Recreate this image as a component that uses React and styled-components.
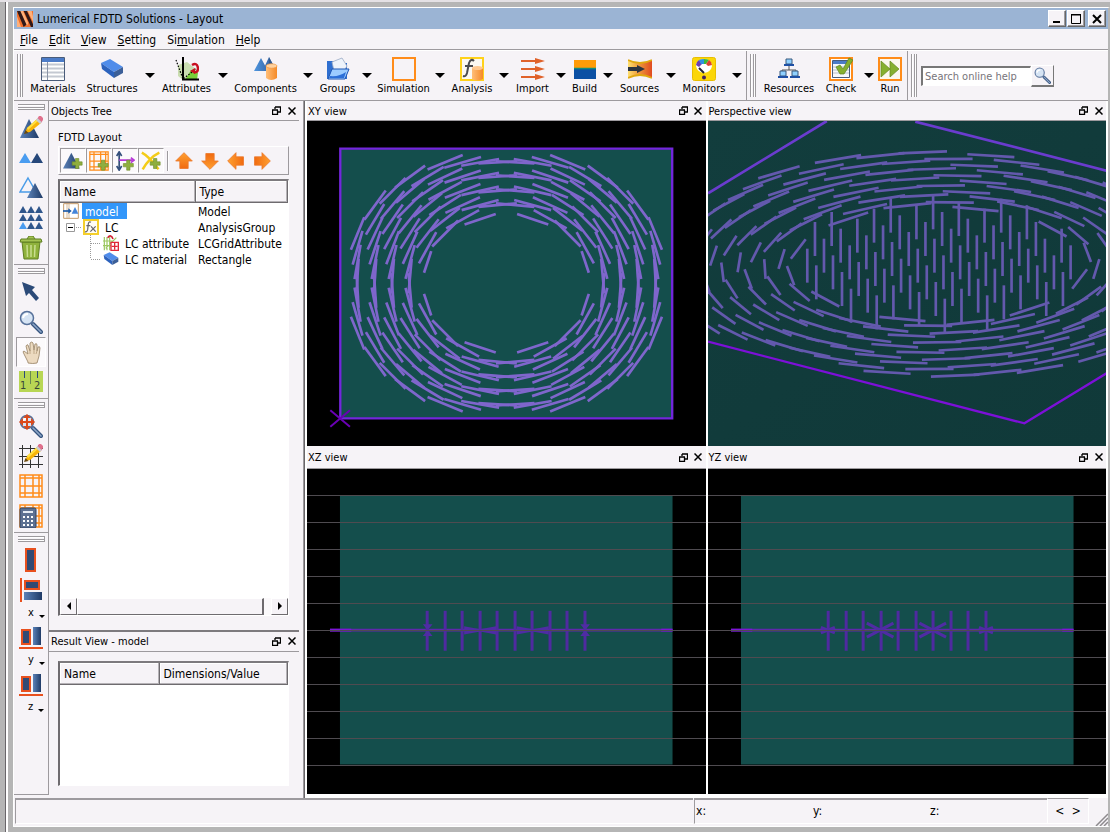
import React from "react";
import styled, { createGlobalStyle, css } from "styled-components";

const face = "#f6f3f7";
const shade = "#9d9a9e";

const GlobalStyle = createGlobalStyle`
  * { box-sizing: border-box; }
  body {
    margin: 0;
    background: #b5b5b5;
    color: #000;
    font: 11px/14px "DejaVu Sans Condensed", "DejaVu Sans", sans-serif;
  }
  button, input {
    font: inherit;
    color: inherit;
  }
  button {
    padding: 0;
    border: 0;
    background: none;
  }
  svg { display: block; flex: none; }
`;

const Desktop = styled.div`
  display: flex;
  min-height: 100vh;
  background: #b5b5b5;
  border-top: 2px solid #e4e1e5;
  border-bottom: 2px solid #69666a;
`;

const Backdrop = styled.div`
  width: 8px;
  border-left: 5px solid #b5b5b5;
  background: linear-gradient(90deg, #69666a 1px, #fff 1px);
`;

const Frame = styled.div`
  flex: 1;
  min-width: 0;
  padding: 5px 0 5px 5px;
  display: flex;
`;

const Window = styled.div`
  flex: 1;
  min-width: 0;
  display: flex;
  flex-direction: column;
  background: ${face};
  border: 1px solid #fff;
  border-right: 2px solid #b5b5b5;
`;

const TitleBar = styled.header`
  height: 21px;
  flex: none;
  display: flex;
  align-items: center;
  padding: 0 2px 0 3px;
  background: #9bb4d4;
  font-size: 12px;
`;

const Title = styled.h1`
  flex: 1;
  margin: 0 0 0 4px;
  padding-top: 1px;
  font-size: 12px;
  font-weight: normal;
`;

const CaptionButton = styled.button`
  width: 18px;
  height: 17px;
  margin-left: ${(p) => (p.$apart ? 3 : 1)}px;
  display: grid;
  place-items: center;
  background: ${face};
  border: 1px solid #fff;
  border-right-color: #666;
  border-bottom-color: #666;
  box-shadow: inset -1px -1px ${shade};
`;

const MenuBar = styled.nav`
  height: 21px;
  flex: none;
  display: flex;
  align-items: center;
  gap: 11px;
  padding: 2px 0 0 6px;
  border-bottom: 1px solid ${shade};
`;

const MenuItem = styled.button`
  font-size: 12px;
  line-height: 16px;
`;

const ToolBars = styled.div`
  height: 51px;
  flex: none;
  display: flex;
  border-top: 1px solid #fff;
  border-bottom: 1px solid ${shade};
`;

const ToolBar = styled.div`
  display: flex;
  padding: 0 ${(p) => p.$end || 0}px 0 3px;
  border-right: ${(p) => (p.$last ? 0 : 1)}px solid ${shade};
`;

const Grip = styled.div`
  width: 6px;
  margin: 3px 0;
  border: 1px solid ${shade};
  border-width: 0 1px;
  background: linear-gradient(90deg, #fff 1px, transparent 1px 2px, ${shade} 2px 3px, #fff 3px);
`;

const ToolButton = styled.button`
  width: ${(p) => p.$w}px;
  padding-top: 6px;
  display: flex;
  flex-direction: column;
  align-items: center;
  gap: 1px;
  white-space: nowrap;
`;

const DropButton = styled.button`
  width: 18px;
  display: grid;
  place-items: center;
  &::after {
    content: "";
    border: 5px solid transparent;
    border-top-color: #000;
    border-bottom: 0;
  }
`;

const Search = styled.form`
  display: flex;
  align-items: center;
  margin-left: 4px;
`;

const SearchInput = styled.input`
  width: 110px;
  height: 20px;
  padding: 0 2px;
  border: 2px solid #777;
  border-right: 1px solid #fff;
  border-bottom: 1px solid #fff;
  background: #fff;
  &::placeholder { color: #77747a; opacity: 1; }
`;

const SearchButton = styled.button`
  width: 23px;
  height: 22px;
  display: grid;
  place-items: center;
  border: 1px solid #fff;
  border-right-color: #777;
  border-bottom: 2px solid #777;
`;

const Body = styled.div`
  flex: 1;
  min-height: 0;
  display: flex;
`;

const SideBar = styled.aside`
  width: 35px;
  flex: none;
  display: flex;
  flex-direction: column;
  border-right: 1px solid ${shade};
  border-bottom: 1px solid ${shade};
  margin-bottom: 3px;
`;

const SideGroup = styled.div`
  height: ${(p) => p.$h}px;
  padding-top: 3px;
  display: flex;
  flex-direction: column;
  align-items: center;
  border-bottom: 1px solid ${shade};
  &:last-child { border: 0; height: auto; }
`;

const SideGrip = styled.div`
  width: 27px;
  height: 6px;
  margin-bottom: 3px;
  border: 1px solid ${shade};
  border-left: 0;
  background: linear-gradient(#fff 1px, transparent 1px 2px, ${shade} 2px 3px, #fff 3px);
`;

const SideButton = styled.button`
  width: 30px;
  height: 30px;
  flex: none;
  display: grid;
  place-items: center;
  ${(p) =>
    p.$on &&
    css`
      background: #fcfafc;
      border: 1px solid ${shade};
      border-right-color: #fff;
      border-bottom-color: #fff;
    `}
`;

const AxisButton = styled.button`
  width: 30px;
  height: 17px;
  padding: 2px 0 0 12px;
  display: flex;
  align-items: flex-start;
  gap: 5px;
  line-height: 12px;
  &::after {
    content: "";
    margin-top: 8px;
    border: 3px solid transparent;
    border-top-color: #000;
    border-bottom: 0;
  }
`;

const LeftDocks = styled.div`
  width: 250px;
  flex: none;
  display: flex;
  flex-direction: column;
`;

const Dock = styled.section`
  display: flex;
  flex-direction: column;
  flex: ${(p) => (p.$h ? `0 0 ${p.$h}px` : "1 1 0")};
  min-height: 0;
  min-width: 0;
  border-top: ${(p) => (p.$h ? "2px solid #7d7a7e" : 0)};
  margin-top: ${(p) => (p.$h ? 4 : 0)}px;
`;

const DockTitle = styled.div`
  height: ${(p) => (p.$tall ? 23 : 20)}px;
  flex: none;
  display: flex;
  align-items: center;
  padding: 0 0 0 ${(p) => (p.$view ? 1 : 2)}px;
  border-bottom: 1px solid ${shade};
  background: ${face};
`;

const DockName = styled.h2`
  flex: 1;
  margin: 0;
  padding-top: 2px;
  font-size: 11px;
  font-weight: normal;
`;

const DockButton = styled.button`
  width: 15px;
  height: 14px;
  display: grid;
  place-items: center;
`;

const Splitter = styled.div`
  width: 8px;
  flex: none;
  border-right: 2px solid #fff;
  background: linear-gradient(90deg, transparent 4px, ${shade} 4px 5px, #696669 5px);
`;

const TreeBody = styled.div`
  flex: 1;
  min-height: 0;
  padding: 10px 10px 10px 9px;
  display: flex;
  flex-direction: column;
`;

const ObjectTools = styled.div`
  height: 29px;
  flex: none;
  margin: 1px 0 4px;
  padding-left: 1px;
  display: flex;
  align-items: center;
  border: 1px solid #fff;
  border-right-color: ${shade};
  border-bottom-color: ${shade};
`;

const AddButton = styled.button`
  width: 26px;
  height: 25px;
  display: grid;
  place-items: center;
  background: #fbf9fb;
  border: 1px solid ${shade};
  border-right-color: #fff;
  border-bottom-color: #fff;
`;

const MoveButton = styled.button`
  width: 26px;
  height: 25px;
  display: grid;
  place-items: center;
`;

const Divider = styled.div`
  width: 2px;
  height: 20px;
  margin: 0 2px 0 3px;
  background: ${shade};
  border-right: 1px solid #fff;
`;

const Sunken = styled.div`
  flex: 1;
  min-height: 0;
  display: flex;
  flex-direction: column;
  justify-content: space-between;
  background: #fff;
  border: 2px solid #6e6b6f;
  border-top-color: #7d7a7e;
  border-right: 1px solid #fff;
  border-bottom: 1px solid #fff;
`;

const Table = styled.table`
  width: 100%;
  table-layout: fixed;
  border-collapse: collapse;
  font-size: 12px;
`;

const Th = styled.th`
  width: ${(p) => (p.$w ? `${p.$w}px` : "auto")};
  height: ${(p) => p.$h}px;
  padding: 2px 4px 0;
  text-align: left;
  font-weight: normal;
  background: ${face};
  border-bottom: 1px solid #6e6b6f;
  border-right: 1px solid #6e6b6f;
  box-shadow: inset -1px -1px #b5b2b6, inset 1px 1px #fff;
`;

const Td = styled.td`
  height: 16px;
  padding: ${(p) => (p.$tree ? "0 0 0 3px" : "2px 3px 0")};
  line-height: 14px;
  white-space: nowrap;
`;

const Node = styled.span`
  height: 16px;
  display: flex;
  align-items: center;
`;

const NodeText = styled.span`
  margin-left: 3px;
  padding: 2px 8px 0 3px;
  ${(p) =>
    p.$selected &&
    css`
      background: #3296fa;
      color: #fff;
    `}
`;

const ScrollBar = styled.div`
  height: 17px;
  display: flex;
  background: #fbf9fb;
`;

const ScrollButton = styled.button`
  width: 17px;
  display: grid;
  place-items: center;
  background: ${face};
  border: 1px solid #fff;
  border-right-color: #6e6b6f;
  border-bottom-color: #6e6b6f;
`;

const Thumb = styled.div`
  flex: 1;
  margin-right: 7px;
  background: ${face};
  border: 1px solid #fff;
  border-right: 2px solid #6e6b6f;
  border-bottom: 1px solid #6e6b6f;
`;

const ResultBody = styled.div`
  flex: 1;
  min-height: 0;
  padding: 9px 10px 12px 9px;
  display: flex;
`;

const Views = styled.div`
  flex: 1;
  min-width: 0;
  display: grid;
  grid-template-columns: 1fr 1fr;
  grid-template-rows: 345px 1fr;
  gap: 0 2px;
  padding: 0 2px 4px 0;
  background: #fff;
`;

const Viewport = styled.svg`
  flex: 1;
  width: 100%;
  min-height: 0;
  background: ${(p) => p.$bg || "#000"};
`;

const StatusBar = styled.footer`
  height: 28px;
  flex: none;
  display: flex;
  font-size: 12px;
`;

const Field = styled.div`
  flex: ${(p) => (p.$w ? `0 0 ${p.$w}px` : "1 1 0")};
  display: flex;
  align-items: center;
  padding-left: 1px;
  margin: 0 0 2px 1px;
  border-top: 2px solid ${shade};
  border-left: 1px solid ${shade};
  border-bottom: 1px solid #fff;
`;

const Coord = styled.span`
  width: 117px;
`;

const Pager = styled.div`
  width: 42px;
  margin-bottom: 2px;
  display: flex;
  justify-content: space-evenly;
  border: 1px solid #fff;
  border-top-color: ${shade};
`;

const SizeGrip = styled.div`
  width: 19px;
  display: flex;
  align-items: flex-end;
  justify-content: flex-end;
`;

/* ---------- icons ---------- */

const Svg = ({ s = 24, children, ...rest }) => (
  <svg width={s} height={s} viewBox="0 0 24 24" aria-hidden="true" {...rest}>
    {children}
  </svg>
);

const GradientDefs = styled.svg`
  position: absolute;
`;

const Defs = () => (
  <GradientDefs width="0" height="0" aria-hidden="true">
    <defs>
      <linearGradient id="navy">
        <stop offset="0" stopColor="#5b82b8" />
        <stop offset="1" stopColor="#1f3a66" />
      </linearGradient>
      <linearGradient id="orange">
        <stop offset="0" stopColor="#ffbe78" />
        <stop offset="1" stopColor="#f58a28" />
      </linearGradient>
      <linearGradient id="fire" x2="0" y2="1">
        <stop offset="0" stopColor="#ffa030" />
        <stop offset="1" stopColor="#f06a10" />
      </linearGradient>
      <linearGradient id="sky">
        <stop offset="0" stopColor="#4f96e0" />
        <stop offset="1" stopColor="#2c5490" />
      </linearGradient>
      <linearGradient id="beam">
        <stop offset="0" stopColor="#ffe070" />
        <stop offset=".4" stopColor="#f0a040" />
        <stop offset="1" stopColor="#e04a20" />
      </linearGradient>
      <linearGradient id="persp" x1="0" y1="0" x2="1" y2="1">
        <stop offset="0" stopColor="#123d3d" />
        <stop offset="1" stopColor="#103939" />
      </linearGradient>
    </defs>
  </GradientDefs>
);

const Pencil = () => (
  <g>
    <path d="M6 17l2-5L18 3l4 4-11 9z" fill="#f8b408" />
    <path d="M8 12L18 3l1.500 1.500L9 14z" fill="#ffe040" />
    <path d="M18 3l2-3h2l2 2v2l-2 3z" fill="#e0708c" />
    <path d="M17 4l1.500-2 4 4L21 8z" fill="#c9cdd4" />
    <path d="M5 18l1.500-4 3 3z" fill="#6b4a10" />
  </g>
);

const Lens = () => (
  <g>
    <path d="M14 14l8 8" stroke="#35537e" strokeWidth="4" strokeLinecap="round" />
    <path d="M14 14l8 8" stroke="#8ea7c8" strokeWidth="1.6" strokeLinecap="round" />
    <circle cx="8" cy="8" r="6.5" fill="#d6e4f4" stroke="#57719a" strokeWidth="1.5" />
    <path d="M4 8q1-4 5-4" stroke="#fff" strokeWidth="2" fill="none" />
  </g>
);

const Brick = () => (
  <g>
    <path d="M1 6l9-4 13 8-9 5z" fill="#4f8cea" />
    <path d="M1 6l13 9v6L2 12z" fill="#2c62bd" />
    <path d="M14 15l9-5v6l-9 5z" fill="#3c5f98" />
  </g>
);

const Plus = ({ x = 11, y = 10 }) => (
  <path d={`M${x + 4} ${y}h4v4h4v4h-4v4h-4v-4h-4v-4h4z`} fill="#8fae3f" stroke="#6c8c28" strokeWidth=".7" />
);

const Mesh = () => (
  <path d="M1 1h22v22H1zM6 1v22M14 1v22M20 1v22M1 4h22M1 12h22M1 19h22" fill="none" stroke="#ff8c1a" strokeWidth="1.5" />
);

const Logo = () => (
  <Svg s={16}>
    <path d="M0 0h24v24H0z" fill="#f0702c" />
    <path d="M0 0h6l9 20-5 4zM10 0h5l9 20v4h-3z" fill="#301818" />
    <path d="M5 0h4l8 18-2 4zM16 0h6l2 8v8zM0 8l6 16H0z" fill="#ffb07a" />
  </Svg>
);

const MaterialsIcon = () => (
  <Svg>
    <path d="M.5.5h23v23H.5z" fill="#fff" stroke="#4a5c7a" />
    <path d="M1 1h22v4H1z" fill="#4c7cc8" />
    <path d="M1 7.500h22M1 11.500h22M1 15.500h22M1 19.500h22" stroke="#c4c9d2" strokeWidth="2" />
    <path d="M6.500 5v18" stroke="#8a94a6" />
  </Svg>
);

const AttributesIcon = () => (
  <Svg>
    <path d="M3 8l9-3 9 7-1 8-5 3H8l-5-4z" fill="#c9dcb0" />
    <path d="M16 13l7 3-1 7H10z" fill="#79cf3a" />
    <path d="M8 0v22.500h16" stroke="#000" strokeWidth="2" fill="none" />
    <path d="M1 3l7 19 13-10" stroke="#000" strokeWidth="1.200" strokeDasharray="1.500 1.500" fill="none" />
    <path d="M17 8q5-3 6 3 0 5-4 4" stroke="#c81020" strokeWidth="2.500" fill="none" />
    <path d="M15 14l5-3v6z" fill="#c81020" />
  </Svg>
);

const ComponentsIcon = () => (
  <Svg>
    <path d="M7 1l7 13H0zM15 0l7 13H9z" fill="url(#sky)" />
    <path d="M15 0l7 13h-7z" fill="#31517f" opacity=".6" />
    <path d="M12 9v12q5 4 11 0V9z" fill="url(#orange)" />
    <ellipse cx="17.500" cy="9" rx="5.500" ry="2.200" fill="#ffd2a0" stroke="#f2983f" strokeWidth=".7" />
  </Svg>
);

const GroupsIcon = () => (
  <Svg>
    <path d="M1 4h6l2 2h12v16H1z" fill="#2f6fd0" />
    <path d="M6 5l10-4 5 8-3 5H8z" fill="#eef3fb" stroke="#9aaac4" strokeWidth=".8" />
    <path d="M6 12h17l-4 10H2z" fill="#9cccff" stroke="#1f56b4" />
    <path d="M4 19q9 1 16-4l-2 6H3z" fill="#2c6fd8" />
  </Svg>
);

const SimulationIcon = () => (
  <Svg>
    <path d="M1 1h22v22H1z" fill="none" stroke="#ff8c1a" strokeWidth="2" />
  </Svg>
);

const AnalysisIcon = () => (
  <Svg>
    <path d="M1 1h22v22H1z" fill="#fbf8f2" stroke="#ffd21a" strokeWidth="2" />
    <path d="M14 4q-3-3-5 2L7 16q-1 4-4 3M5 9h8" fill="none" stroke="#4a4a4e" strokeWidth="2" />
    <path d="M12 11v11q5 3 11 0V11z" fill="url(#orange)" />
    <ellipse cx="17.500" cy="11" rx="5.500" ry="2" fill="#ffc890" />
  </Svg>
);

const ImportIcon = () => (
  <Svg>
    <path d="M0 4h16M0 12h16M0 20h16" stroke="#e0622a" strokeWidth="2" />
    <path d="M14 1l10 3-10 3zM14 9l10 3-10 3zM14 17l10 3-10 3z" fill="#e0622a" />
  </Svg>
);

const BuildIcon = () => (
  <Svg>
    <path d="M1 3h22v9H1z" fill="#ff9c08" />
    <path d="M1 12h22v10H1z" fill="#0b50a4" />
    <path d="M1 11.500h22" stroke="#138c7c" strokeWidth="1.500" />
  </Svg>
);

const SourcesIcon = () => (
  <Svg>
    <path d="M0 3q12 6 24 0v18q-12-6-24 0z" fill="url(#beam)" />
    <path d="M0 3q12 6 24 0M0 21q12-6 24 0" stroke="#e0a810" strokeWidth="1.800" fill="none" />
    <path d="M0 10h9V8l8 4-8 4v-2H0z" fill="#2c3440" />
  </Svg>
);

const MonitorsIcon = () => (
  <Svg>
    <rect x=".5" y=".5" width="23" height="23" rx="2" fill="#fbd608" stroke="#e8be00" />
    <path d="M4 9a8 7 0 0 1 16 0q-1 6-8 7-7-1-8-7z" fill="#fff" />
    <path d="M4 8q0-3 3-5l3 4-3 3z" fill="#6b3fb8" />
    <path d="M7 3q2-1 5-1v5H9z" fill="#2f90e0" />
    <path d="M12 2q3 0 5 1l-3 4h-2z" fill="#3cb83c" />
    <path d="M17 3q3 2 3 5l-4 1-2-2z" fill="#e04030" />
    <path d="M7 11l5 5" stroke="#223" strokeWidth="2" />
    <circle cx="12" cy="20.500" r="2" fill="#402060" />
  </Svg>
);

const ResourcesIcon = () => (
  <Svg>
    <path d="M12 8v5M5 16v-3h14v3" fill="none" stroke="#555" />
    <path d="M9 2h6v5H9zM3 14h6v5H3zM15 14h6v5h-6z" fill="#8fd0ff" stroke="#38587c" />
    <path d="M7 7h10v2H7zM1 19h10v2H1zM13 19h10v2H13z" fill="#1e4fa4" />
  </Svg>
);

const CheckIcon = () => (
  <Svg>
    <path d="M1 1h22v22H1z" fill="#fff" stroke="#ff8c1a" strokeWidth="2" />
    <path d="M3.500 3.500h17v17h-17z" fill="#f6f8fc" stroke="#4a5c7a" />
    <path d="M4 4h16v3H4z" fill="#4c7cc8" />
    <path d="M4 10h16M4 13h16M4 16h16" stroke="#b8bfca" />
    <path d="M7 10l4-2 3 4 6-11 4 2-9 14h-4z" fill="#86b030" stroke="#5f8420" strokeWidth=".7" />
  </Svg>
);

const RunIcon = () => (
  <Svg>
    <path d="M1 1h22v22H1z" fill="#fbf8ee" stroke="#ff8c1a" strokeWidth="2" />
    <path d="M3 4l9 8-9 8zM12 4l9 8-9 8z" fill="#86b030" stroke="#64881f" strokeWidth=".7" />
  </Svg>
);

const Hand = () => (
  <Svg>
    <path
      d="M9 22l-4-8q-2-3 0-3l4 3-2-8q1-2 2-1l2 6V3q2-2 3 0l1 7 1-6q2-1 2 1v6l1-4q2-1 2 1l-1 8-2 7q-4 1-9 0z"
      fill="#ecdac0"
      stroke="#a08c70"
      strokeWidth=".9"
    />
    <path d="M11 10v4M15 10v4M18 11l-1 3" stroke="#bfa888" />
  </Svg>
);

const Triangles = ({ list }) => (
  <Svg>
    {list.map(([x, y, w, h, fill]) => (
      <path key={`${x}-${y}`} d={`M${x} ${y}l${w / 2} ${h}h${-w}z`} fill={fill || "#26477a"} />
    ))}
  </Svg>
);

const small = [];
[0, 8, 16].forEach((y) => [4, 12, 20].forEach((x) => small.push([x, y, 8, 7, y === 16 && x === 4 ? "#4a9cf0" : "#2f568c"])));

const Ruler = () => (
  <Svg>
    <path d="M0 1h24v21H0z" fill="#b8d654" />
    <path d="M5.500 1v7M18.500 1v7" stroke="#2c4a7c" />
    <path d="M11.500 1v13" stroke="#6a8a50" />
    <text x="1" y="19" fontSize="11" fill="#37463a">1</text>
    <text x="15" y="19" fontSize="11" fill="#37463a">2</text>
  </Svg>
);

const Trash = () => (
  <Svg>
    <path d="M3 6h18l-2 17H5z" fill="#8fb23c" stroke="#5f7f22" />
    <path d="M2 3h20l1 3H1zM8 3l2-3h4l2 3" fill="#a4c452" stroke="#5f7f22" />
    <path d="M8 9l.5 12M12 9v12M16 9l-.5 12" stroke="#c9de90" strokeWidth="1.500" />
  </Svg>
);

const Align = ({ axis }) => (
  <Svg>
    {axis === "x" ? (
      <g>
        <path d="M2 0v24" stroke="#e8501e" strokeWidth="2" />
        <path d="M6 3h14v8H6z" fill="#314a74" stroke="#e8501e" strokeWidth="2" />
        <path d="M5 14h18v8H5z" fill="url(#navy)" />
      </g>
    ) : (
      <g>
        <path d="M0 23h24" stroke="#e8501e" strokeWidth="2" />
        <path d="M3 5h8v14H3z" fill="#314a74" stroke="#e8501e" strokeWidth="2" />
        <path d="M14 2h8v18h-8z" fill="url(#navy)" />
      </g>
    )}
  </Svg>
);

const Arrow = ({ turn }) => (
  <Svg s={20}>
    <path transform={`rotate(${turn} 12 12)`} d="M12 2l10 10h-5v9H7v-9H2z" fill="url(#fire)" stroke="#ec7a2c" />
  </Svg>
);

const FloatIcon = () => (
  <svg width="9" height="9" viewBox="0 0 9 9" aria-hidden="true">
    <path d="M3 1h6M3 1v2M8.500 1v5H6M.5 4v4.500h5V4M0 4h6" stroke="#000" fill="none" strokeWidth="1.300" />
  </svg>
);

const CloseIcon = () => (
  <svg width="8" height="8" viewBox="0 0 8 8" aria-hidden="true">
    <path d="M.5.5l7 7M7.500.5l-7 7" stroke="#000" strokeWidth="1.500" />
  </svg>
);

const FxIcon = () => (
  <Svg s={16}>
    <path d="M1.500 1.500h21v21h-21z" fill="#fffdf4" stroke="#f4cf2c" strokeWidth="3" />
    <path d="M12 5q-3-2-4 2L7 16q-1 4-4 3M5 10h6M12 11l7 8M19 11l-8 8" fill="none" stroke="#66646a" strokeWidth="1.800" />
  </Svg>
);

const ModelIcon = () => (
  <Svg s={16}>
    <path d="M1 1h22v22H1z" fill="#fff" stroke="#c49a6a" strokeWidth="1.500" />
    <path d="M6 1v22M9 1v22" stroke="#c49a6a" />
    <path d="M0 12h10" stroke="#1c5aa8" strokeWidth="2.500" />
    <path d="M8 8l5 4-5 4z" fill="#1c5aa8" />
    <path d="M18 6l5 10H13z" fill="#4484d8" />
  </Svg>
);

const GridAttrIcon = () => (
  <Svg s={16}>
    <path d="M2 3v20M6 3v20M10 3v20M0 9h16M0 16h12M4 20L20 4" stroke="#9cc860" strokeWidth="1.800" />
    <path d="M7 4q5-6 8 2" stroke="#d02030" strokeWidth="2.500" fill="none" />
    <path d="M12 11h11v12H12z" fill="#fff" stroke="#e02838" strokeWidth="2" />
    <path d="M17.500 12v10M13 17h9" stroke="#e02838" strokeWidth="2" />
  </Svg>
);

const tools = [
  ["Materials", 60, MaterialsIcon, false],
  ["Structures", 58, () => <Svg><Brick /></Svg>, true],
  ["Attributes", 55, AttributesIcon, true],
  ["Components", 67, ComponentsIcon, true],
  ["Groups", 41, GroupsIcon, true],
  ["Simulation", 55, SimulationIcon, true],
  ["Analysis", 46, AnalysisIcon, true],
  ["Import", 39, ImportIcon, true],
  ["Build", 29, BuildIcon, true],
  ["Sources", 45, SourcesIcon, true],
  ["Monitors", 48, MonitorsIcon, true],
];

const runTools = [
  ["Resources", 66, ResourcesIcon, false],
  ["Check", 38, CheckIcon, true],
  ["Run", 24, RunIcon, false],
];

const menus = ["File", "Edit", "View", "Setting", "Simulation", "Help"];

const ToolItems = ({ items }) =>
  items.map(([label, width, Icon, drop]) => (
    <React.Fragment key={label}>
      <ToolButton $w={width}>
        <Icon />
        {label}
      </ToolButton>
      {drop && <DropButton aria-label={`${label} menu`} />}
    </React.Fragment>
  ));

const DockHeader = ({ title, view, tall }) => (
  <DockTitle $view={view} $tall={tall}>
    <DockName>{title}</DockName>
    <DockButton aria-label="Float"><FloatIcon /></DockButton>
    <DockButton aria-label="Close"><CloseIcon /></DockButton>
  </DockTitle>
);

/* ---------- viewports ---------- */

// director grid, half-integer positions around the centre
const directors = [];
for (let i = -8.5; i <= 8.5; i++) {
  for (let j = -8.5; j <= 8.5; j++) {
    const r = Math.hypot(i, j);
    if (r < 9.4) directors.push({ i, j, r });
  }
}

const XYView = () => (
  <Viewport viewBox="6 3 1197 975" preserveAspectRatio="none">
    <path d="M106 86h997v809H106z" fill="#144e4c" stroke="#7326dc" strokeWidth="7" />
    <g stroke="#7f66cc" strokeWidth="8">
      {directors
        .filter(({ r }) => r > 4.7)
        .map(({ i, j, r }) => {
          const steep = Math.abs(i) > Math.abs(j);
          const len = (58 - 6 * (i / r) ** 2) * (r < 4.8 ? (steep ? 0.65 : 0.86) : 1);
          const x = 605 + i * 52.6;
          const y = 490 + j * 42.7;
          const dx = (-j / r) * len;
          const dy = (i / r) * len;
          return <line key={`${i},${j}`} x1={x - dx} y1={y - dy} x2={x + dx} y2={y + dy} />;
        })}
    </g>
    <path d="M76 871l59 49M135 871l-59 49" stroke="#6a00b4" strokeWidth="6" />
  </Viewport>
);

const PerspectiveView = () => (
  <Viewport $bg="#113c3c" viewBox="9 63 1194 975" preserveAspectRatio="none">
    <path d="M9 63h1194v975H9z" fill="url(#persp)" />
    <g stroke="#6359ad" strokeWidth="8">
      {directors.map(({ i, j, r }) => {
        const x = 701 + i * 77 - j * 50;
        const y = 492 + i * 20 + j * 30;
        if (r < 4.6) return <line key={`${i},${j}`} x1={x} y1={y - 51} x2={x} y2={y + 51} />;
        const a = (-j / r) * 0.76;
        const b = (i / r) * 0.86;
        const dx = a * 77 - b * 50;
        const dy = a * 20 + b * 30;
        return <line key={`${i},${j}`} x1={x - dx} y1={y - dy} x2={x + dx} y2={y + dy} />;
      })}
    </g>
    <path d="M9 280L365 63M630 65l573 147" stroke="#6a3cce" strokeWidth="8" />
    <path d="M9 725l948 245 246-150" stroke="#7c10d8" strokeWidth="7" fill="none" />
  </Viewport>
);

const sideBars = [367, 421, 472, 526, 577, 631, 682, 736, 787, 841];

const SideView = ({ yz }) => (
  <Viewport viewBox="6 72 1197 975" preserveAspectRatio="none">
    <path d="M105 153h999v807H105z" fill="#144e4c" />
    <path d="M75 556h1029" stroke="#5e28ac" strokeWidth="9" />
    <path d="M75 556h64M1070 556h34" stroke="#7d14d8" strokeWidth="9" />
    {sideBars.map((x) => (
      <path key={x} d={`M${x} 498v120`} stroke="#4f2aa0" strokeWidth="9" />
    ))}
    {yz ? (
      <path
        d="M483 535l80 42M483 577l80-42M641 535l80 42M641 577l80-42M345 548l42 16M345 564l42-16M820 548l42 16M820 564l42-16"
        stroke="#4f2ca4"
        strokeWidth="9"
      />
    ) : (
      <path
        d="M354 538h29l-14 18 14 18h-29l14-18zM827 538h29l-14 18 14 18h-29l14-18zM478 544l48 9 48-9v25l-48-9-48 9zM636 544l48 9 48-9v25l-48-9-48 9z"
        fill="#4f2ca4"
      />
    )}
    <g stroke="#4f4b50" strokeWidth="3" shapeRendering="crispEdges">
      {Array.from({ length: 11 }, (_, n) => (
        <path key={n} d={`M6 ${151.5 + n * 81}h1197`} />
      ))}
    </g>
  </Viewport>
);

const rows = [
  { name: "model", type: "Model", icon: <ModelIcon />, selected: true },
  { name: "LC", type: "AnalysisGroup", icon: <FxIcon />, level: 1 },
  { name: "LC attribute", type: "LCGridAttribute", icon: <GridAttrIcon />, level: 2 },
  { name: "LC material", type: "Rectangle", icon: <Svg s={16}><Brick /></Svg>, level: 2, last: true },
];

const Branch = ({ level, last }) => {
  if (level === 1) {
    return (
      <svg width="20" height="16" viewBox="0 0 20 16" aria-hidden="true">
        <path d="M3.500 4.500h8v8h-8z" fill="#fff" stroke="#999" />
        <path d="M5 8.500h5" stroke="#000" />
        <path d="M13 8.500h6" stroke="#999" strokeDasharray="1 1" />
      </svg>
    );
  }
  if (level === 2) {
    return (
      <svg width="40" height="16" viewBox="0 0 40 16" aria-hidden="true">
        <path d={`M27.500 0v${last ? 8 : 16}M28 8.500h10`} stroke="#999" strokeDasharray="1 1" fill="none" />
      </svg>
    );
  }
  return null;
};

export default function App() {
  return (
    <>
      <GlobalStyle />
      <Defs />
      <Desktop>
        <Backdrop />
        <Frame>
          <Window>
            <TitleBar>
              <Logo />
              <Title>Lumerical FDTD Solutions - Layout</Title>
              <CaptionButton aria-label="Minimize">
                <svg width="10" height="10"><path d="M1 8h7" stroke="#000" strokeWidth="2" /></svg>
              </CaptionButton>
              <CaptionButton aria-label="Maximize">
                <svg width="12" height="12"><path d="M1.500 2h9v8.500h-9zM1 1.500h10" stroke="#000" fill="none" /></svg>
              </CaptionButton>
              <CaptionButton $apart aria-label="Close">
                <svg width="10" height="10"><path d="M1 1l8 8M9 1L1 9" stroke="#000" strokeWidth="2" /></svg>
              </CaptionButton>
            </TitleBar>

            <MenuBar>
              {menus.map((name) => {
                const at = name === "Simulation" ? 2 : 0;
                return (
                  <MenuItem key={name}>
                    {name.slice(0, at)}
                    <u>{name[at]}</u>
                    {name.slice(at + 1)}
                  </MenuItem>
                );
              })}
            </MenuBar>

            <ToolBars>
              <ToolBar>
                <Grip />
                <ToolItems items={tools} />
              </ToolBar>
              <ToolBar $end={5}>
                <Grip />
                <ToolItems items={runTools} />
              </ToolBar>
              <ToolBar $last>
                <Grip />
                <Search>
                  <SearchInput aria-label="Search online help" placeholder="Search online help" />
                  <SearchButton type="button" aria-label="Search"><Svg s={17}><Lens /></Svg></SearchButton>
                </Search>
              </ToolBar>
            </ToolBars>

            <Body>
              <SideBar>
                <SideGroup $h={164}>
                  <SideGrip />
                  <SideButton aria-label="Edit">
                    <Svg><path d="M10 3l10 19H1z" fill="url(#navy)" /><Pencil /></Svg>
                  </SideButton>
                  <SideButton aria-label="Duplicate">
                    <Triangles list={[[6, 7, 12, 10, "#4a9cf0"], [18, 7, 12, 10]]} />
                  </SideButton>
                  <SideButton aria-label="Copy">
                    <Svg>
                      <path d="M9 2l8 14H1z" fill="none" stroke="#4a9ce8" strokeWidth="1.500" />
                      <path d="M16 7l8 15H8z" fill="url(#navy)" />
                    </Svg>
                  </SideButton>
                  <SideButton aria-label="Array"><Triangles list={small} /></SideButton>
                  <SideButton aria-label="Delete"><Trash /></SideButton>
                </SideGroup>
                <SideGroup $h={134}>
                  <SideGrip />
                  <SideButton aria-label="Select">
                    <Svg><path d="M3 2l13 5-3 3 7 8-3 3-7-8-3 3z" fill="#2b4a78" /></Svg>
                  </SideButton>
                  <SideButton aria-label="Zoom"><Svg><Lens /></Svg></SideButton>
                  <SideButton $on aria-label="Pan"><Hand /></SideButton>
                  <SideButton aria-label="Ruler"><Ruler /></SideButton>
                </SideGroup>
                <SideGroup $h={134}>
                  <SideGrip />
                  <SideButton aria-label="Zoom extent">
                    <Svg>
                      <Lens />
                      <path d="M8 0l4 4H9v3h3V4l4 4-4 4V9H9v3h3l-4 4-4-4h3V9H4v3L0 8l4-4v3h3V4H4z" fill="#dc4a1c" />
                    </Svg>
                  </SideButton>
                  <SideButton aria-label="Edit grid">
                    <Svg>
                      <path d="M3.500 1v23M11.500 1v23M19.500 1v23M0 4.500h24M0 12.500h24M0 20.500h24" stroke="#333" />
                      <Pencil />
                    </Svg>
                  </SideButton>
                  <SideButton aria-label="Mesh"><Svg><Mesh /></Svg></SideButton>
                  <SideButton aria-label="Calculator">
                    <Svg>
                      <Mesh />
                      <rect x="1" y="4" width="16" height="20" rx="1.500" fill="#5d7192" stroke="#2e4364" />
                      <path d="M4 7h10v2H4z" fill="#e4ebf4" />
                      <path d="M4 13h10M4 17h10M4 21h10" stroke="#fff" strokeWidth="2" strokeDasharray="2 2" />
                    </Svg>
                  </SideButton>
                </SideGroup>
                <SideGroup>
                  <SideGrip />
                  <SideButton aria-label="Fit">
                    <Svg><path d="M7 1h9v22H7z" fill="#314a74" stroke="#e8501e" strokeWidth="2" /></Svg>
                  </SideButton>
                  <SideButton aria-label="Align x"><Align axis="x" /></SideButton>
                  <AxisButton>x</AxisButton>
                  <SideButton aria-label="Align y"><Align axis="y" /></SideButton>
                  <AxisButton>y</AxisButton>
                  <SideButton aria-label="Align z"><Align axis="z" /></SideButton>
                  <AxisButton>z</AxisButton>
                </SideGroup>
              </SideBar>

              <LeftDocks>
                <Dock>
                  <DockHeader title="Objects Tree" />
                  <TreeBody>
                    <span>FDTD Layout</span>
                    <ObjectTools>
                      <AddButton aria-label="Add object">
                        <Svg s={20}><path d="M10 2l10 19H0z" fill="url(#navy)" /><Plus x={11} y={9} /></Svg>
                      </AddButton>
                      <AddButton aria-label="Add mesh"><Svg s={20}><Mesh /><Plus x={11} y={11} /></Svg></AddButton>
                      <AddButton aria-label="Add axis">
                        <Svg s={20}>
                          <path d="M5 3v18M2 6l3-5 3 5M2 18l3 5 3-5" stroke="#34507c" strokeWidth="2" fill="none" />
                          <path d="M5 11h16M19 8l4 3-4 3" stroke="#b838d8" strokeWidth="2" fill="none" />
                          <Plus x={10} y={11} />
                        </Svg>
                      </AddButton>
                      <AddButton aria-label="Add cross">
                        <Svg s={20}>
                          <path d="M1 2q8 4 20 20M22 2Q10 8 2 22" stroke="#f4cc18" strokeWidth="3" fill="none" />
                          <Plus x={11} y={9} />
                        </Svg>
                      </AddButton>
                      <Divider />
                      <MoveButton aria-label="Up"><Arrow turn={0} /></MoveButton>
                      <MoveButton aria-label="Down"><Arrow turn={180} /></MoveButton>
                      <MoveButton aria-label="Left"><Arrow turn={270} /></MoveButton>
                      <MoveButton aria-label="Right"><Arrow turn={90} /></MoveButton>
                    </ObjectTools>
                    <Sunken>
                      <Table>
                        <thead>
                          <tr>
                            <Th $w={135} $h={21}>Name</Th>
                            <Th $h={21}>Type</Th>
                          </tr>
                        </thead>
                        <tbody>
                          {rows.map((row) => (
                            <tr key={row.name}>
                              <Td $tree>
                                <Node>
                                  <Branch level={row.level} last={row.last} />
                                  {row.icon}
                                  <NodeText $selected={row.selected}>{row.name}</NodeText>
                                </Node>
                              </Td>
                              <Td>{row.type}</Td>
                            </tr>
                          ))}
                        </tbody>
                      </Table>
                      <ScrollBar>
                        <ScrollButton aria-label="Scroll left">
                          <svg width="8" height="8"><path d="M6 0v8L2 4z" /></svg>
                        </ScrollButton>
                        <Thumb />
                        <ScrollButton aria-label="Scroll right">
                          <svg width="8" height="8"><path d="M2 0v8l4-4z" /></svg>
                        </ScrollButton>
                      </ScrollBar>
                    </Sunken>
                  </TreeBody>
                </Dock>
                <Dock $h={168}>
                  <DockHeader title="Result View - model" />
                  <ResultBody>
                    <Sunken>
                      <Table>
                        <thead>
                          <tr>
                            <Th $w={99} $h={22}>Name</Th>
                            <Th $h={22}>Dimensions/Value</Th>
                          </tr>
                        </thead>
                      </Table>
                    </Sunken>
                  </ResultBody>
                </Dock>
              </LeftDocks>

              <Splitter />

              <Views>
                <Dock>
                  <DockHeader view title="XY view" />
                  <XYView />
                </Dock>
                <Dock>
                  <DockHeader view title="Perspective view" />
                  <PerspectiveView />
                </Dock>
                <Dock>
                  <DockHeader view tall title="XZ view" />
                  <SideView />
                </Dock>
                <Dock>
                  <DockHeader view tall title="YZ view" />
                  <SideView yz />
                </Dock>
              </Views>
            </Body>

            <StatusBar>
              <Field />
              <Field $w={348}>
                <Coord>x:</Coord>
                <Coord>y:</Coord>
                <Coord>z:</Coord>
              </Field>
              <Pager>
                <button aria-label="Previous">&lt;</button>
                <button aria-label="Next">&gt;</button>
              </Pager>
              <SizeGrip>
                <svg width="13" height="13"><path d="M1 13L13 1M5 13l8-8M9 13l4-4" stroke="#8d8a8e" strokeWidth="1.500" /></svg>
              </SizeGrip>
            </StatusBar>
          </Window>
        </Frame>
      </Desktop>
    </>
  );
}
